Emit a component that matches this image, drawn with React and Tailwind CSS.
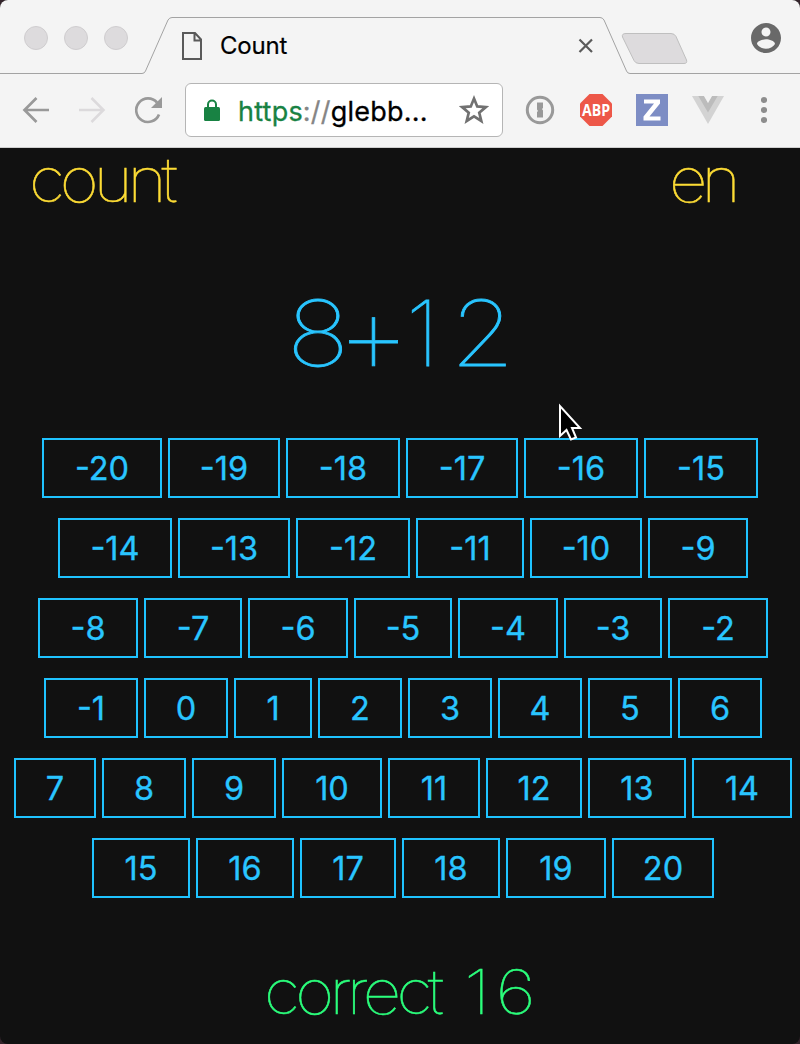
const ROWS = [
  { pad: "pl-[42px]", cells: [[-20, 120], [-19, 112], [-18, 114], [-17, 112], [-16, 114], [-15, 114]] },
  { pad: "pl-[58px]", cells: [[-14, 114], [-13, 112], [-12, 114], [-11, 108], [-10, 112], [-9, 100]] },
  { pad: "pl-[38px]", cells: [[-8, 100], [-7, 98], [-6, 100], [-5, 98], [-4, 100], [-3, 98], [-2, 100]] },
  { pad: "pl-[44px]", cells: [[-1, 94], [0, 84], [1, 78], [2, 84], [3, 84], [4, 84], [5, 84], [6, 84]] },
  { pad: "pl-[14px]", cells: [[7, 82], [8, 84], [9, 84], [10, 100], [11, 92], [12, 96], [13, 98], [14, 100]] },
  { pad: "pl-[92px]", cells: [[15, 98], [16, 98], [17, 96], [18, 98], [19, 100], [20, 102]] },
];

function TabStrip() {
  return (
    <div className="relative flex h-[74px] shrink-0">
      <svg className="absolute inset-0" width="800" height="74" fill="none">
        <path d="M0 73.5H142Q144.500 73.500 145.500 71L168 20Q169.500 17.500 172 17.500H600Q602.500 17.500 604 20L626.500 71Q627.500 73.500 630 73.500H800" stroke="#a3a3a3" />
        <path d="M626 33.500H671Q674.500 33.500 676 36.500L686.500 60Q687.500 63.500 684 63.500H639Q635.500 63.500 634 60.500L622.500 37Q621.500 33.500 626 33.500Z" fill="#dddbdd" stroke="#bfbfbf" />
      </svg>
      <div className="relative flex w-full items-center">
        <div className="mt-[2px] ml-6 flex gap-4">
          {[0, 1, 2].map((i) => (
            <span key={i} className="h-6 w-6 rounded-full border border-[#cfcdcf] bg-[#dddbdd]" />
          ))}
        </div>
        <svg className="mt-[17px] ml-[54px]" width="20" height="28" fill="none" stroke="#5a5a5a" strokeWidth="2">
          <path d="M1 1H13L19 7.500V27H1ZM12.500 1V8.500H19" />
        </svg>
        <span className="mt-[17px] ml-[18px] w-[358px] text-[24px] leading-8 tracking-[-0.2px] text-black [-webkit-text-stroke:0.2px]">Count</span>
        <svg className="mt-[17px]" width="16" height="16" stroke="#5a5a5a" strokeWidth="2.200">
          <path d="M1.500 1.500L14 14M14 1.500L1.500 14" />
        </svg>
        <svg className="mt-[2px] ml-[154px]" width="36" height="36" viewBox="0 0 24 24" fill="#696969">
          <path d="M12 2C6.480 2 2 6.480 2 12s4.480 10 10 10 10-4.480 10-10S17.520 2 12 2zm0 3c1.660 0 3 1.340 3 3s-1.340 3-3 3-3-1.340-3-3 1.340-3 3-3zm0 14.200c-2.500 0-4.710-1.280-6-3.220.030-1.990 4-3.080 6-3.080 1.990 0 5.970 1.090 6 3.080-1.290 1.940-3.500 3.220-6 3.220z" />
        </svg>
      </div>
    </div>
  );
}

function Toolbar() {
  return (
    <div className="flex h-[74px] shrink-0 items-center border-b border-[#cfcfcf] pb-px">
      <svg className="ml-[22px]" width="28" height="28" fill="none" stroke="#999" strokeWidth="2.700">
        <path d="M27 14H3M14.500 2L2.500 14L14.500 26" />
      </svg>
      <svg className="ml-7" width="28" height="28" fill="none" stroke="#dcdadc" strokeWidth="2.500">
        <path d="M1 14H25M13.500 2L25.500 14L13.500 26" />
      </svg>
      <svg className="ml-7" width="30" height="30" fill="none" stroke="#999" strokeWidth="2.700">
        <path d="M25 19.500A11.800 11.800 0 1 1 23 7.500" />
        <path d="M28 2V13H17Z" fill="#999" stroke="none" />
      </svg>
      <div className="ml-[21px] flex h-[54px] w-[318px] items-center rounded-md border border-[#b5b5b5] bg-white">
        <svg className="ml-[18px]" width="16" height="22" fill="none">
          <rect y="8" width="16" height="14" rx="1.500" fill="#188243" />
          <path d="M4 9V5.500A4 4 0 0 1 12 5.500V9" stroke="#188243" strokeWidth="2" />
        </svg>
        <span className="mt-[3px] ml-[18px] w-[221px] text-[27px] leading-8 tracking-[0.220px] text-black [-webkit-text-stroke:0.3px]">
          <span className="text-[#188243]">https</span>
          <span className="text-[#858585]">://</span>glebb...
        </span>
        <svg width="30" height="30" viewBox="1.500 1 27 27" fill="none" stroke="#717171" strokeWidth="2.400">
          <path d="M15 4.200L17.900 11.300L25.600 11.900L19.700 16.900L21.600 24.400L15 20.300L8.400 24.400L10.300 16.900L4.400 11.900L12.100 11.300Z" />
        </svg>
      </div>
      <svg className="ml-[22px]" width="30" height="30" fill="none">
        <circle cx="15" cy="15" r="12.700" stroke="#999" strokeWidth="3" />
        <path d="M12 7.500H18V13L17 14L18 15.500V22.500H12V17L13 16L12 14.500Z" fill="#999" />
      </svg>
      <svg className="ml-[25px] overflow-visible" width="32" height="32">
        <path d="M9.500 0H22.500L32 9.500V22.500L22.500 32H9.500L0 22.500V9.500Z" fill="#ed5748" />
        <text x="16" y="22" textAnchor="middle" textLength="28" lengthAdjust="spacingAndGlyphs" fontFamily="Open Sans, sans-serif" fontWeight="700" fontSize="16" fill="#fff">ABP</text>
      </svg>
      <svg className="ml-6" width="32" height="32">
        <rect width="32" height="32" fill="#7d8dc4" />
        <path d="M8 5.500H24V9.500L13.500 22.500H24.500V26.500H7.500V22.500L18 9.500H8Z" fill="#fff" />
      </svg>
      <svg className="ml-6" width="32" height="28">
        <path d="M0 0H32L16 28Z" fill="#d3d3d3" />
        <path d="M6.300 0H12L16 7L20 0H25.700L16 16.500Z" fill="#bcbcbc" />
        <path d="M12 0H20L16 7Z" fill="#f4f4f4" />
      </svg>
      <svg className="ml-[37px]" width="6" height="28" fill="#8d8d8d">
        <circle cx="3" cy="4" r="3.100" />
        <circle cx="3" cy="14" r="3.100" />
        <circle cx="3" cy="24" r="3.100" />
      </svg>
    </div>
  );
}

export default function App() {
  return (
    <div className="h-[1044px] w-[800px] overflow-hidden bg-[#33242b] font-['Inter',sans-serif]">
      <div className="flex h-full flex-col overflow-hidden rounded-lg bg-[#111]">
        <div className="flex h-[148px] shrink-0 flex-col bg-[#f4f4f4]">
          <TabStrip />
          <Toolbar />
        </div>
        <div className="flex h-[72px] shrink-0 justify-between pr-[65px] pl-[29px] text-[61px] leading-[64px] font-thin text-[#fddc35] [-webkit-text-stroke:0.5px]">
          <span className="origin-left scale-x-110 tracking-[-4.700px]">count</span>
          <span className="origin-right scale-x-110 tracking-[-5.400px]">en</span>
        </div>
        <div className="flex h-[218px] shrink-0 pt-[63px] pl-[290px] text-center text-[91px] leading-[100px] font-thin text-[#29c5ff] [-webkit-text-stroke:0.8px]">
          <span className="flex w-[56px] scale-x-[1.150] justify-center">8</span>
          <span className="flex w-[55px] justify-center text-[117px]">+</span>
          <span className="flex w-[43px] justify-center">1</span>
          <span className="flex w-[77px] scale-x-[1.140] justify-center">2</span>
        </div>
        <div className="flex flex-col gap-5">
          {ROWS.map((row) => (
            <div key={row.pad} className={`flex gap-[6px] ${row.pad}`}>
              {row.cells.map(([value, width]) => (
                <button key={value} style={{ width }} className="flex h-[60px] shrink-0 items-center justify-center border-2 border-[#1fc3ff] pt-[3px] text-[32.500px] leading-none text-[#29c5ff] [-webkit-text-stroke:0.3px]">
                  {value}
                </button>
              ))}
            </div>
          ))}
        </div>
        <div className="flex pt-[58px] pl-[264px] text-[61px] leading-[72px] font-thin text-[#2bff7c] [-webkit-text-stroke:0.5px]">
          <span className="w-[200px] origin-left scale-x-110 tracking-[-4.200px]">correct</span>
          <span className="origin-left scale-x-[1.170] tracking-[4.500px]">16</span>
        </div>
      </div>
      <svg className="absolute top-[402px] left-[556px]" width="28" height="40">
        <path d="M4 4V34L10.500 28L15 37.500L20 35.500L16 26H24Z" fill="#000" stroke="#fff" strokeWidth="2" />
      </svg>
    </div>
  );
}
